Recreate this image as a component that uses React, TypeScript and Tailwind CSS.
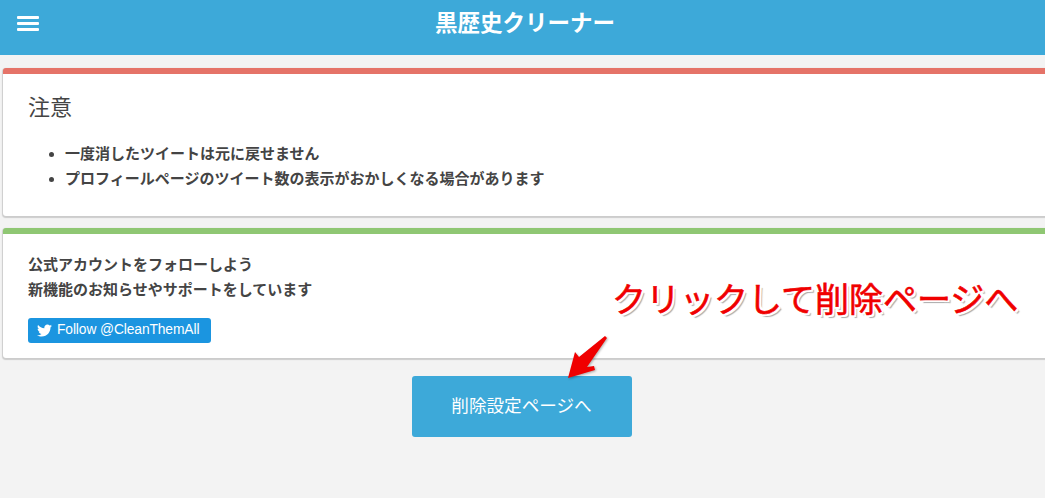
import React from 'react';
import { FaTwitter } from 'react-icons/fa';

const jp = "font-['Liberation_Sans','Noto_Sans_CJK_JP',sans-serif]";

const App: React.FC = () => {
  return (
    <div className={`relative w-[1045px] h-[498px] overflow-hidden bg-[#f3f3f3] text-[#444] ${jp}`}>
      <header className="relative h-[55px] bg-[#3da9d9]">
        <div className="absolute left-[17px] top-[16px] flex w-[22px] flex-col gap-[3px]">
          <span className="h-[3px] rounded-[1px] bg-white" />
          <span className="h-[3px] rounded-[1px] bg-white" />
          <span className="h-[3px] rounded-[1px] bg-white" />
        </div>
        <h1 className="pt-[9px] pl-[5px] text-center text-[22.5px] leading-[30px] font-bold text-white">黒歴史クリーナー</h1>
      </header>

      <div className="w-[1060px] pt-[13px] pl-[3px]">
        <section className="h-[148px] rounded-[3px] border-t-[6px] border-[#e57368] bg-white pt-[19px] pl-[25px] shadow-[0_1px_1px_1px_rgba(0,0,0,0.16)]">
          <h2 className="text-[22px] leading-[30px] font-normal text-[#444]">注意</h2>
          <ul className="mt-[18px] list-disc pl-[37px] text-[15px] leading-[25px] font-bold">
            <li>一度消したツイートは元に戻せません</li>
            <li>プロフィールページのツイート数の表示がおかしくなる場合があります</li>
          </ul>
        </section>

        <section className="mt-[12px] h-[130px] rounded-[3px] border-t-[6px] border-[#8fc773] bg-white pt-[18px] pl-[25px] shadow-[0_1px_1px_1px_rgba(0,0,0,0.16)]">
          <p className="text-[15px] leading-[25px] font-bold">公式アカウントをフォローしよう</p>
          <p className="text-[15px] leading-[25px] font-bold">新機能のお知らせやサポートをしています</p>
          <a className="mt-[16px] flex h-[25px] w-[183px] items-center gap-[5px] rounded-[3px] bg-[#1b95e0] pl-[9px] text-[13.8px] tracking-[-0.1px] text-white">
            <FaTwitter className="h-[15px] w-[15px]" />
            <span>Follow @CleanThemAll</span>
          </a>
        </section>
      </div>

      <div className="mt-[18px] mr-[2px] flex justify-center">
        <button className="h-[61px] w-[220px] rounded-[3px] bg-[#3da9d9] text-[17.6px] text-white">削除設定ページへ</button>
      </div>

      <div className="absolute left-[612px] top-[279px] text-[34px] leading-[42px] whitespace-nowrap text-[#f00000] [-webkit-text-stroke:0.6px_#f00000] [text-shadow:2px_0_0_#fff,-2px_0_0_#fff,0_2px_0_#fff,0_-2px_0_#fff,2px_2px_0_#fff,-2px_2px_0_#fff,2px_-2px_0_#fff,-2px_-2px_0_#fff,3px_3px_1px_#aaa]">
        クリックして削除ページへ
      </div>

      <svg className="absolute left-[560px] top-[330px] drop-shadow-[1px_1px_1px_rgba(0,0,0,0.3)]" width="52" height="54" viewBox="0 0 52 54">
        <path d="M45 6 L47 8 L27 37 L34 36 L35 40 L8 48 L15 22 L19 27 Z" fill="#f00000" />
      </svg>
    </div>
  );
};

export default App;
